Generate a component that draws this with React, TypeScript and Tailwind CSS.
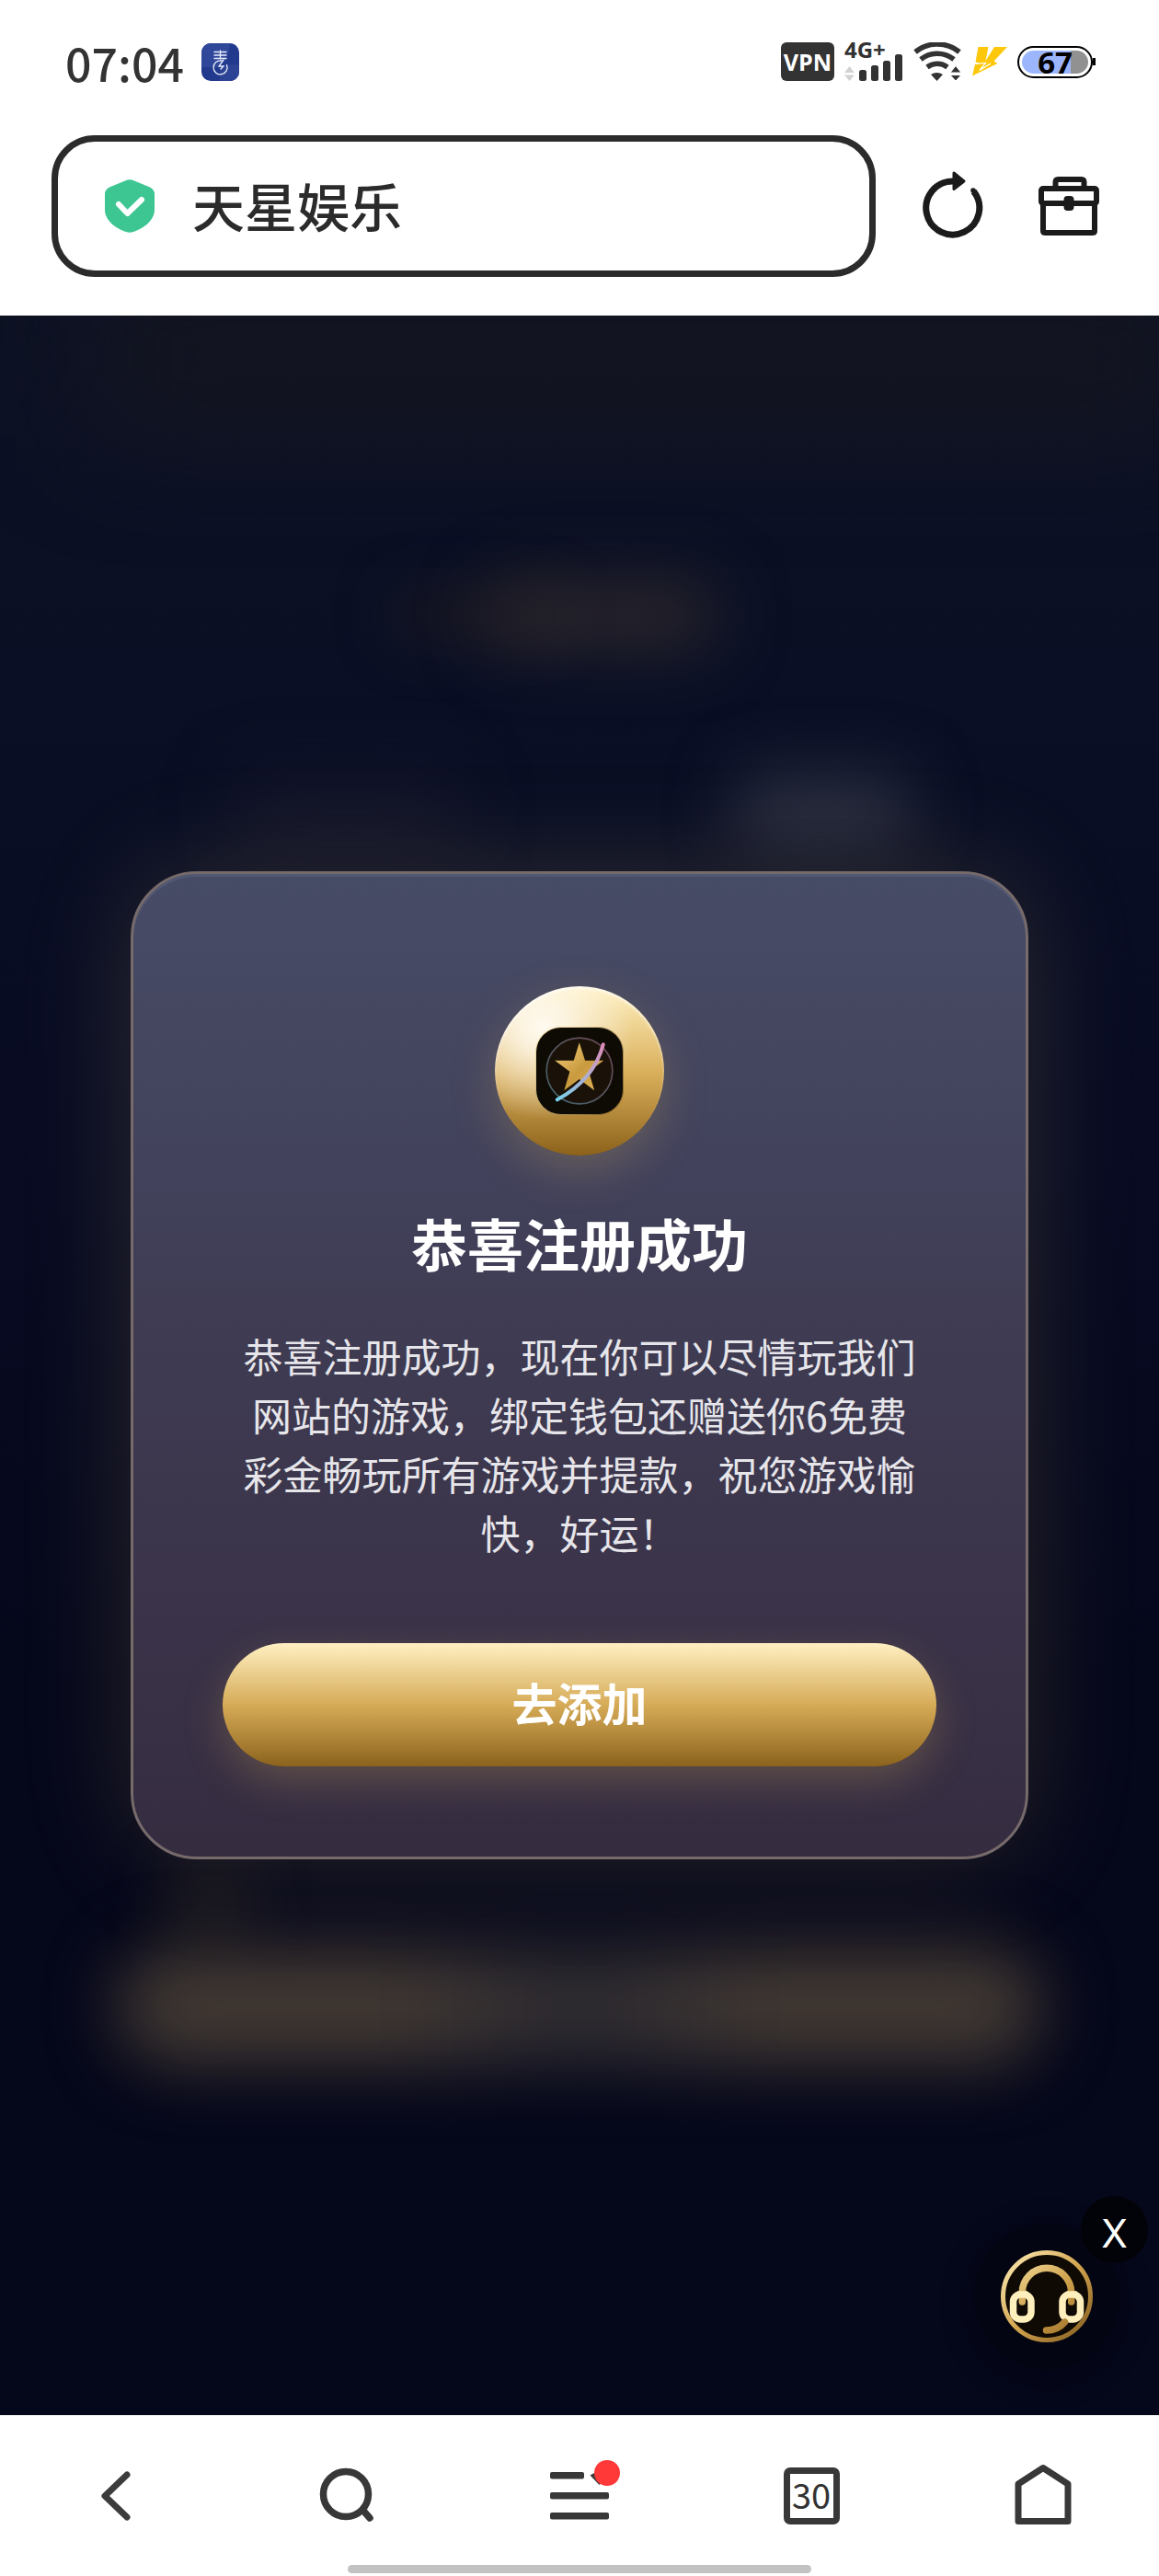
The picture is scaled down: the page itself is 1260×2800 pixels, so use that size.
import React from "react";

const cjk = "font-['Noto_Sans_CJK_SC',sans-serif]";

function AppBadge() {
  return (
    <svg width="41" height="41" viewBox="0 0 41 41" aria-hidden="true">
      <rect width="41" height="41" rx="10" fill="#223a8e" />
      <path d="M0 26V10A10 10 0 0 1 10 0H31Q30 22 16 26Z" fill="#30479a" />
      <path d="M20 41V28Q31 21 41 24V31A10 10 0 0 1 31 41Z" fill="#2d4494" />
      <g fill="none" stroke="#e8eefc" strokeWidth="1.3" strokeLinecap="round">
        <path d="M14 9.500h13M14 13h13M14 16.500h13M20.500 8v9" />
        <path d="M22 19A7.500 7.500 0 1 0 27.500 23.500M24 18l-5 7h5l-3 3" />
      </g>
    </svg>
  );
}

function CellSignal() {
  return (
    <div className="relative h-[42px] w-[64px]">
      <span className="absolute top-0 left-0 font-['Open_Sans',sans-serif] text-[24px] leading-[16px] font-bold">4G+</span>
      <svg className="absolute inset-0" width="64" height="42" viewBox="0 0 64 42" aria-hidden="true">
        <path d="M0 33L5.500 26L11 33ZM0 35.500L5.500 42L11 35.500Z" fill="#d2d2d2" />
        <g fill="#333">
          <rect x="16" y="30" width="8" height="12" rx="2.500" />
          <rect x="29" y="25" width="8" height="17" rx="2.500" />
          <rect x="42" y="20" width="8" height="22" rx="2.500" />
          <rect x="55" y="13" width="8" height="29" rx="2.500" />
        </g>
      </svg>
    </div>
  );
}

function Wifi() {
  return (
    <svg width="53" height="42" viewBox="0 0 53 42" aria-hidden="true">
      <g fill="none" stroke="#333" strokeWidth="5.500">
        <path d="M2 10.500A38 38 0 0 1 50 10.500" />
        <path d="M8 18.500A29 29 0 0 1 44 18.500" />
        <path d="M15 27A18 18 0 0 1 37 27" />
      </g>
      <path d="M19 35Q26 31 32 35L25.500 42Z" fill="#333" />
      <path d="M40 33L46 25.500L52 33ZM40 35.500L46 42L52 35.500Z" fill="#333" stroke="#fff" strokeWidth="1" />
    </svg>
  );
}

function Bolt() {
  return (
    <svg width="38" height="32" viewBox="0 0 38 32" aria-hidden="true">
      <path d="M6.500 0H17.500L14.500 15L24 0H38L23.500 15.500L27.500 18L0 31.500L3 19L9 18L3.500 16.500Z" fill="#fdc80c" />
      <path d="M2.500 18.500L14.500 17.500L8 25.500L20 18" fill="none" stroke="#fff" strokeWidth="1.200" />
    </svg>
  );
}

function Battery() {
  return (
    <div className="flex items-center">
      <div className="h-[35px] w-[82px] rounded-full border-2 border-black bg-white p-[3px]">
        <div className="flex h-full items-center justify-center rounded-full bg-[linear-gradient(90deg,#9cb6fd_74%,#919191_74%)] font-['Open_Sans',sans-serif] text-[33px] leading-none font-bold text-black">
          67
        </div>
      </div>
      <div className="h-[8px] w-[3px] bg-black" />
    </div>
  );
}

function StatusBar() {
  return (
    <div className="flex h-[134px] items-center justify-between pr-[69px] pl-[71px] text-[#333]">
      <div className="flex items-center gap-[19px]">
        <time className={`${cjk} text-[50px] leading-none font-medium`}>07:04</time>
        <AppBadge />
      </div>
      <div className="flex items-center gap-[11px]">
        <div className="flex h-[42px] w-[58px] items-center justify-center rounded-[6px] bg-[#333] font-['Open_Sans',sans-serif] text-[25px] leading-none font-bold text-white">
          VPN
        </div>
        <CellSignal />
        <Wifi />
        <Bolt />
        <Battery />
      </div>
    </div>
  );
}

function AddressRow() {
  return (
    <div className="flex items-center pt-[13px] pr-[64px] pb-[42px] pl-[56px]">
      <label className="flex h-[154px] min-w-0 flex-1 items-center gap-[41px] rounded-[47px] border-7 border-[#2b2b2b] pl-[51px]">
        <svg className="shrink-0" width="54" height="58" viewBox="0 0 54 58" aria-hidden="true">
          <path
            d="M22 1.500Q27 -1 32 1.500L49 8.500Q54 11 54 16V33C54 44 43 53 31 57Q27 58.500 23 57C11 53 0 44 0 33V16Q0 11 5 8.500Z"
            fill="#3dc692"
          />
          <path d="M15 27L24.500 37L40 22" fill="none" stroke="#fff" strokeWidth="6" strokeLinecap="round" strokeLinejoin="round" />
        </svg>
        <input
          aria-label="地址栏"
          defaultValue="天星娱乐"
          className={`${cjk} min-w-0 flex-1 bg-transparent pb-1 text-[57px] leading-[84px] font-medium text-[#2b2b2b] outline-none`}
        />
      </label>
      <button aria-label="刷新" className="ml-[50px] pb-1">
        <svg width="68" height="74" viewBox="0 0 68 74">
          <path d="M34 12A29 29 0 1 0 56.500 23" fill="none" stroke="#1b1b1b" strokeWidth="7" />
          <circle cx="56" cy="22" r="2.800" fill="#1b1b1b" />
          <path d="M35 3L46 12L35 20.500Z" fill="#1b1b1b" stroke="#1b1b1b" strokeWidth="3" strokeLinejoin="round" />
        </svg>
      </button>
      <button aria-label="工具箱" className="ml-[58px]">
        <svg width="68" height="66" viewBox="0 0 68 66" fill="none" stroke="#1b1b1b" strokeWidth="6" strokeLinejoin="round">
          <path d="M19.500 12V7Q19.500 4 22.500 4H47.500Q50.500 4 50.500 7V12" />
          <rect x="4" y="14" width="60" height="16" rx="2" />
          <path d="M6 30V60Q6 62 8 62H60Q62 62 62 60V30" />
          <rect x="31.500" y="25" width="5" height="10" rx="1" fill="#1b1b1b" />
        </svg>
      </button>
    </div>
  );
}

function Backdrop() {
  return (
    <div aria-hidden="true" className="absolute inset-0 overflow-hidden bg-[linear-gradient(180deg,#0c1123_0%,#0a0f25_18%,#080b22_40%,#05071b_65%,#05071a_100%)]">
      <div className="absolute -top-10 -right-10 left-[8%] h-[170px] bg-[#141521] blur-[60px]" />
      <div className="absolute top-[302px] left-[34%] h-[48px] w-[14%] rounded-full bg-[#1a1822] blur-[30px]" />
      <div className="absolute top-[290px] left-[42%] h-[72px] w-[20%] rounded-full bg-[#2b262b] blur-[36px]" />
      <div className="absolute top-[500px] left-[20%] h-[80px] w-[20%] rounded-full bg-[#131529] blur-[36px]" />
      <div className="absolute top-[496px] left-[63%] h-[80px] w-[16%] rounded-full bg-[#282c3e] blur-[34px]" />
      <div className="absolute top-[1690px] left-[15%] h-[80px] w-[6%] rounded-full bg-[#1b1a1e] blur-[34px]" />
      <div className="absolute top-[1774px] right-[10%] left-[10%] h-[128px] rounded-full bg-[linear-gradient(90deg,#413832_30%,#2f2c31_47%,#2f2c31_53%,#413832_70%)] blur-[36px]" />
    </div>
  );
}

function StarBadge() {
  return (
    <div className="flex size-[184px] items-center justify-center rounded-full bg-[radial-gradient(circle_at_28%_24%,#fffaf0_0%,rgba(255,250,240,0.8)_14%,rgba(255,250,240,0)_52%),linear-gradient(180deg,#fff0be_0%,#d9ae5a_52%,#8c621b_100%)] shadow-[0_16px_48px_rgba(217,174,90,0.25),inset_0_3px_3px_rgba(255,255,255,0.6)]">
      <svg width="96" height="96" viewBox="0 0 95 95" aria-hidden="true">
        <defs>
          <linearGradient id="star" x1="0" y1="0" x2="1" y2="1">
            <stop offset="0" stopColor="#f3cf7c" />
            <stop offset="0.55" stopColor="#c99a3f" />
            <stop offset="1" stopColor="#e3b75b" />
          </linearGradient>
          <linearGradient id="swoosh" x1="0" y1="1" x2="1" y2="0">
            <stop offset="0" stopColor="#78d2ec" />
            <stop offset="1" stopColor="#de8cba" />
          </linearGradient>
          <linearGradient id="tileEdge" x1="0" y1="0" x2="1" y2="1">
            <stop offset="0" stopColor="#ffeeb8" />
            <stop offset="1" stopColor="#7a571c" />
          </linearGradient>
        </defs>
        <rect x="0.500" y="0.500" width="94" height="94" rx="27" fill="#0e0a04" stroke="url(#tileEdge)" />
        <circle cx="47.500" cy="47.500" r="35.500" fill="#1a1208" stroke="url(#swoosh)" strokeOpacity="0.45" strokeWidth="1.600" />
        <path d="M47.300 17L53.500 36.300H73.500L57.500 48.300L63.500 68.500L47.300 56.500L31 68.500L37 48.300L21 36.300H41.300Z" fill="url(#star)" />
        <path d="M23.500 78.500Q63 57 73 19" fill="none" stroke="url(#swoosh)" strokeWidth="4" strokeLinecap="round" />
      </svg>
    </div>
  );
}

function SuccessDialog() {
  return (
    <section
      role="dialog"
      aria-labelledby="dialog-title"
      className={`${cjk} relative mx-[142px] flex w-full max-w-[976px] flex-col items-center rounded-[72px] border-3 border-[#766a6b] bg-[linear-gradient(180deg,#474c66_0%,#454761_14%,#42425c_30%,#3f3c53_45%,#3b344a_72%,#352c40_100%)] px-[97px] pt-[122px] pb-[98px] text-center shadow-[0_0_120px_rgba(205,180,110,0.18),inset_0_3px_0_rgba(85,94,122,0.7)]`}
    >
      <StarBadge />
      <h1 id="dialog-title" className="mt-[49px] text-[61px] leading-[92px] font-bold text-white">
        恭喜注册成功
      </h1>
      <p className="mt-[44px] px-4 text-[43px] leading-[64px] text-[#e6e5ea]">
        恭喜注册成功，现在你可以尽情玩我们网站的游戏，绑定钱包还赠送你6免费彩金畅玩所有游戏并提款，祝您游戏愉快，好运！
      </p>
      <button className="mt-[89px] h-[134px] w-full rounded-full bg-[linear-gradient(180deg,#fff0c2_0%,#d6ab57_50%,#8c631d_100%)] pb-2 text-[49px] leading-none font-bold text-white shadow-[0_16px_44px_rgba(217,174,90,0.25)]">
        去添加
      </button>
    </section>
  );
}

function SupportWidget() {
  return (
    <div className="absolute right-[43px] bottom-[50px]">
      <button aria-label="在线客服" className="flex size-[158px] items-center justify-center rounded-full bg-[#040512] shadow-[0_8px_40px_rgba(0,0,0,0.2)]">
        <svg width="100" height="100" viewBox="0 0 100 100" fill="none" strokeLinecap="round">
          <defs>
            <linearGradient id="ring" x1="0" y1="0" x2="1" y2="1">
              <stop offset="0" stopColor="#ffeeb8" />
              <stop offset="0.5" stopColor="#d3a550" />
              <stop offset="1" stopColor="#805a1d" />
            </linearGradient>
            <linearGradient id="band" gradientUnits="userSpaceOnUse" x1="20" y1="15" x2="80" y2="90">
              <stop offset="0" stopColor="#f0d692" />
              <stop offset="0.5" stopColor="#cd9f4a" />
              <stop offset="1" stopColor="#a2762c" />
            </linearGradient>
          </defs>
          <circle cx="50" cy="50" r="47.500" fill="#0f0a04" stroke="url(#ring)" strokeWidth="5" />
          <g stroke="#ffefbd" strokeWidth="7.500">
            <rect x="13.500" y="48" width="19.500" height="27" rx="8" />
            <rect x="67" y="48" width="19.500" height="27" rx="8" />
          </g>
          <path d="M23.300 56V46A26.700 26.700 0 0 1 76.700 46V56" stroke="url(#band)" strokeWidth="7.500" />
          <g stroke="#ffefbd" strokeWidth="7.500" strokeLinecap="butt">
            <path d="M18 48H29M71.500 48H82.500" />
          </g>
          <path d="M49.500 87Q62 87 69.500 78" stroke="url(#band)" strokeWidth="7.500" />
        </svg>
      </button>
      <button
        aria-label="关闭客服"
        className="absolute -top-[30px] -right-[31px] flex size-[73px] items-center justify-center rounded-full bg-[#020308] pt-[8px] font-['Inter',sans-serif] text-[42px] leading-none text-white"
      >
        X
      </button>
    </div>
  );
}

function BottomNav() {
  return (
    <nav className="border-t border-[#e8e8e8] bg-white pb-[3px]">
      <div className="grid h-[162px] grid-cols-5 place-items-center pt-3">
        <button aria-label="返回">
          <svg width="60" height="64" viewBox="0 0 60 64" fill="none" stroke="#3c3c3c" strokeWidth="7" strokeLinecap="round" strokeLinejoin="round">
            <path d="M42 9L18 32L42 55" />
          </svg>
        </button>
        <button aria-label="搜索">
          <svg width="64" height="64" viewBox="0 0 64 64" fill="none" stroke="#383838" strokeWidth="7.500" strokeLinecap="round">
            <circle cx="30" cy="30" r="24.500" />
            <path d="M49 48L56 56" />
          </svg>
        </button>
        <button aria-label="菜单" className="relative">
          <svg width="64" height="64" viewBox="0 0 64 64">
            <g fill="#383838">
              <rect x="0" y="6" width="37" height="7.500" rx="2" />
              <rect x="0" y="28" width="64" height="7.500" rx="2" />
              <rect x="0" y="50" width="64" height="7.500" rx="2" />
              <path d="M43.500 9.500L50 6L58 14L53.500 20Z" />
            </g>
          </svg>
          <span className="absolute -top-[7px] -right-[12px] size-[28px] rounded-full bg-[#ff3838]" />
        </button>
        <button
          aria-label="标签页 30"
          className={`${cjk} flex h-[62px] w-[61px] items-center justify-center rounded-[7px] border-7 border-[#383838] pb-1 text-[38px] leading-none text-[#333]`}
        >
          30
        </button>
        <button aria-label="主页">
          <svg width="62" height="70" viewBox="0 0 62 70" fill="none" stroke="#383838" strokeWidth="7" strokeLinejoin="round">
            <path d="M31 4.500L58 22V62.500H4V22Z" />
          </svg>
        </button>
      </div>
      <div className="mx-auto h-[9px] w-2/5 rounded-full bg-[#c2c2c2]" />
    </nav>
  );
}

export default function App() {
  return (
    <div className="flex min-h-screen flex-col bg-white">
      <header>
        <StatusBar />
        <AddressRow />
      </header>
      <main className="relative flex flex-1 items-center justify-center">
        <Backdrop />
        <SuccessDialog />
        <SupportWidget />
      </main>
      <BottomNav />
    </div>
  );
}
